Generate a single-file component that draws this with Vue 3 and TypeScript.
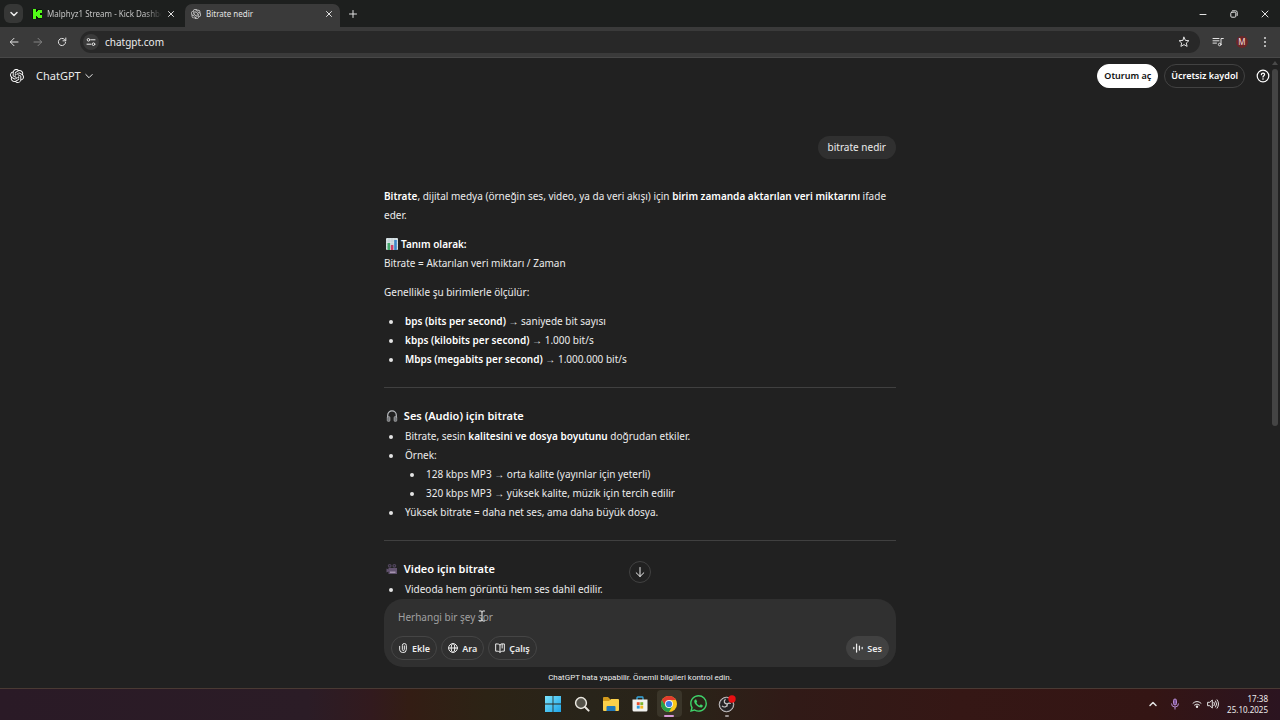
<script setup lang="ts">
import { ref } from 'vue'

interface Unit {
  name: string
  text: string
}

const address = ref('chatgpt.com')
const prompt = ref('')

const units: Unit[] = [
  { name: 'bps (bits per second)', text: 'saniyede bit sayısı' },
  { name: 'kbps (kilobits per second)', text: '1.000 bit/s' },
  { name: 'Mbps (megabits per second)', text: '1.000.000 bit/s' },
]

const samples: string[] = [
  '128 kbps MP3 → orta kalite (yayınlar için yeterli)',
  '320 kbps MP3 → yüksek kalite, müzik için tercih edilir',
]

const knot =
  'M22.2819 9.8211a5.9847 5.9847 0 0 0-.5157-4.9108 6.0462 6.0462 0 0 0-6.5098-2.9A6.0651 6.0651 0 0 0 4.9807 4.1818a5.9847 5.9847 0 0 0-3.9977 2.9 6.0462 6.0462 0 0 0 .7427 7.0966 5.98 5.98 0 0 0 .511 4.9107 6.051 6.051 0 0 0 6.5146 2.9001A5.9847 5.9847 0 0 0 13.2599 24a6.0557 6.0557 0 0 0 5.7718-4.2058 5.9894 5.9894 0 0 0 3.9977-2.9001 6.0557 6.0557 0 0 0-.7475-7.073zm-9.022 12.6081a4.4755 4.4755 0 0 1-2.8764-1.0408l.1419-.0804 4.7783-2.7582a.7948.7948 0 0 0 .3927-.6813v-6.7369l2.02 1.1686a.071.071 0 0 1 .038.052v5.5826a4.504 4.504 0 0 1-4.4945 4.4944zm-9.6607-4.1254a4.4708 4.4708 0 0 1-.5346-3.0137l.142.0852 4.783 2.7582a.7712.7712 0 0 0 .7806 0l5.8428-3.3685v2.3324a.0804.0804 0 0 1-.0332.0615L9.74 19.9502a4.4992 4.4992 0 0 1-6.1408-1.6464zM2.3408 7.8956a4.485 4.485 0 0 1 2.3655-1.9728V11.6a.7664.7664 0 0 0 .3879.6765l5.8144 3.3543-2.0201 1.1685a.0757.0757 0 0 1-.071 0l-4.8303-2.7865A4.504 4.504 0 0 1 2.3408 7.872zm16.5963 3.8558L13.1038 8.364 15.1192 7.2a.0757.0757 0 0 1 .071 0l4.8303 2.7913a4.4944 4.4944 0 0 1-.6765 8.1042v-5.6772a.79.79 0 0 0-.407-.667zm2.0107-3.0231l-.142-.0852-4.7735-2.7818a.7759.7759 0 0 0-.7854 0L9.409 9.2297V6.8974a.0662.0662 0 0 1 .0284-.0615l4.8303-2.7866a4.4992 4.4992 0 0 1 6.6802 4.66zM8.3065 12.863l-2.02-1.1638a.0804.0804 0 0 1-.038-.0567V6.0742a4.4992 4.4992 0 0 1 7.3757-3.4537l-.142.0805L8.704 5.459a.7948.7948 0 0 0-.3927.6813zm1.0976-2.3654l2.602-1.4998 2.6069 1.4998v2.9994l-2.5974 1.4997-2.6067-1.4997Z'
</script>

<template>
  <div class="desktop">
    <div class="tabstrip">
      <button class="tab-search" aria-label="Sekmelerde ara">
        <svg width="10" height="10" viewBox="0 0 10 10"><path d="M2 3.5 5 6.5 8 3.5" class="line bold" /></svg>
      </button>
      <div class="tab">
        <svg class="favicon" width="10" height="10" viewBox="0 0 10 10">
          <rect width="10" height="10" rx="1" fill="#0a150a" />
          <path fill="#53fc18" d="M1 0h3v3h1V2h1V1h4v3H8v1H7v0h1v1h2v3H6V8H5V7H4v3H1z" />
        </svg>
        <a class="tab-title fade" href="#">Malphyz1 Stream - Kick Dashboard</a>
        <button class="icon-btn" aria-label="Sekmeyi kapat">
          <svg width="8" height="8" viewBox="0 0 8 8"><path d="M1.5 1.5 6.5 6.5M6.5 1.5 1.5 6.5" class="line" /></svg>
        </button>
      </div>
      <div class="tab active">
        <svg class="favicon" width="10" height="10" viewBox="0 0 24 24"><path :d="knot" fill="#dcdcdc" /></svg>
        <a class="tab-title" href="#">Bitrate nedir</a>
        <button class="icon-btn" aria-label="Sekmeyi kapat">
          <svg width="8" height="8" viewBox="0 0 8 8"><path d="M1.5 1.5 6.5 6.5M6.5 1.5 1.5 6.5" class="line" /></svg>
        </button>
      </div>
      <button class="icon-btn new-tab" aria-label="Yeni sekme">
        <svg width="8" height="8" viewBox="0 0 8 8"><path d="M4 .5v7M.5 4h7" class="line" /></svg>
      </button>
      <div class="window-controls">
        <button class="icon-btn" aria-label="Küçült">
          <svg width="8" height="8" viewBox="0 0 8 8"><path d="M1 4.5h6" class="line" /></svg>
        </button>
        <button class="icon-btn" aria-label="Önceki boyut">
          <svg width="8" height="8" viewBox="0 0 8 8">
            <rect x=".8" y="2.2" width="5" height="5" rx="1" class="line" />
            <path d="M2.5.8h3.2q1.5 0 1.5 1.5v3.2" class="line" />
          </svg>
        </button>
        <button class="icon-btn" aria-label="Kapat">
          <svg width="8" height="8" viewBox="0 0 8 8"><path d="M1 1 7 7M7 1 1 7" class="line" /></svg>
        </button>
      </div>
    </div>

    <div class="toolbar">
      <button class="icon-btn nav" aria-label="Geri">
        <svg width="10" height="10" viewBox="0 0 10 10"><path d="M9 5H1.5M5 1.3 1.3 5 5 8.7" class="line" /></svg>
      </button>
      <button class="icon-btn nav dim" aria-label="İleri">
        <svg width="10" height="10" viewBox="0 0 10 10"><path d="M1 5h7.5M5 1.3 8.7 5 5 8.7" class="line" /></svg>
      </button>
      <button class="icon-btn nav" aria-label="Yenile">
        <svg width="10" height="10" viewBox="0 0 10 10">
          <path d="M8.6 5.2A3.6 3.6 0 1 1 7.5 2.4L8.7 3.6M8.8 1v2.8H6" class="line" />
        </svg>
      </button>
      <div class="omnibox">
        <button class="site-info" aria-label="Site bilgilerini göster">
          <svg width="10" height="10" viewBox="0 0 10 10">
            <circle cx="2.5" cy="2.8" r="1.3" class="line" />
            <path d="M5 2.8h4M1 7.2h4" class="line" />
            <circle cx="7.5" cy="7.2" r="1.3" class="line" />
          </svg>
        </button>
        <input v-model="address" class="address" aria-label="Adres ve arama çubuğu" />
        <button class="icon-btn" aria-label="Yer işareti ekle">
          <svg width="12" height="12" viewBox="0 0 12 12">
            <path d="M6 1.2 7.4 4.4 10.9 4.7 8.3 7 9.1 10.4 6 8.6 2.9 10.4 3.7 7 1.1 4.7 4.6 4.4Z" class="line" />
          </svg>
        </button>
      </div>
      <div class="toolbar-actions">
        <button class="icon-btn" aria-label="Medya denetimleri">
          <svg width="12" height="12" viewBox="0 0 12 12">
            <path d="M1 2.5h6M1 4.8h6M1 7.1h3.5M9 8.3V2.5h2.3" class="line" />
            <circle cx="7.7" cy="8.5" r="1.3" class="line" />
          </svg>
        </button>
        <button class="avatar" aria-label="Profil">M</button>
        <button class="icon-btn" aria-label="Diğer">
          <svg width="10" height="12" viewBox="0 0 10 12" fill="#ddd">
            <circle cx="5" cy="2" r="1" /><circle cx="5" cy="6" r="1" /><circle cx="5" cy="10" r="1" />
          </svg>
        </button>
      </div>
    </div>

    <main class="page">
      <header class="page-header">
        <svg width="14" height="14" viewBox="0 0 24 24"><path :d="knot" fill="#fff" /></svg>
        <button class="model">
          ChatGPT
          <svg width="8" height="8" viewBox="0 0 8 8"><path d="M.8 2.5 4 5.7 7.2 2.5" class="line" /></svg>
        </button>
        <div class="account">
          <button class="pill light">Oturum aç</button>
          <button class="pill outline">Ücretsiz kaydol</button>
          <button class="icon-btn help" aria-label="Yardım">
            <svg width="14" height="14" viewBox="0 0 14 14">
              <circle cx="7" cy="7" r="5.8" class="line thick" />
              <path d="M5.4 5.6C5.5 3.5 8.7 3.6 8.6 5.6 8.6 6.8 7 6.8 7 8.1" class="line thick" />
              <circle cx="7" cy="10" r=".8" fill="#fff" />
            </svg>
          </button>
        </div>
      </header>

      <div class="thread">
        <article class="column">
          <p class="question">bitrate nedir</p>
          <p>
            <strong>Bitrate</strong>, dijital medya (örneğin ses, video, ya da veri akışı) için
            <strong>birim zamanda aktarılan veri miktarını</strong> ifade eder.
          </p>
          <p>
            <svg class="emoji" width="12" height="12" viewBox="0 0 12 12">
              <rect width="12" height="12" rx="1" fill="#d9e3e6" />
              <path d="M0 3h12M0 6h12M0 9h12M3 0v12M6 0v12M9 0v12" stroke="#adc0ca" stroke-width=".5" />
              <path d="M1.5 5h2.6v7H1.5z" fill="#43a86b" />
              <path d="M4.8 7h2.6v5H4.8z" fill="#cf3d65" />
              <path d="M8.2 2h2.6v10H8.2z" fill="#3d86c8" />
            </svg>
            <strong>Tanım olarak:</strong><br />
            Bitrate = Aktarılan veri miktarı / Zaman
          </p>
          <p>Genellikle şu birimlerle ölçülür:</p>
          <ul>
            <li v-for="unit in units" :key="unit.name">
              <strong>{{ unit.name }}</strong> → {{ unit.text }}
            </li>
          </ul>
          <hr />
          <h3>
            <svg class="emoji" width="12" height="12" viewBox="0 0 12 12" fill="none">
              <path d="M1.7 8V5.2a4.3 4.3 0 0 1 8.6 0V8" stroke="#b9bcc0" stroke-width="1.2" />
              <rect x="1.2" y="6.5" width="2.8" height="5" rx="1.2" fill="#74777b" stroke="#c5c5c5" stroke-width=".5" />
              <rect x="8" y="6.5" width="2.8" height="5" rx="1.2" fill="#74777b" stroke="#c5c5c5" stroke-width=".5" />
            </svg>
            Ses (Audio) için bitrate
          </h3>
          <ul>
            <li>Bitrate, sesin <strong>kalitesini ve dosya boyutunu</strong> doğrudan etkiler.</li>
            <li>
              Örnek:
              <ul>
                <li v-for="sample in samples" :key="sample">{{ sample }}</li>
              </ul>
            </li>
            <li>Yüksek bitrate = daha net ses, ama daha büyük dosya.</li>
          </ul>
          <hr />
          <h3>
            <svg class="emoji" width="12" height="12" viewBox="0 0 12 12">
              <circle cx="3.7" cy="2.8" r="1.9" fill="#51465c" /><circle cx="8.3" cy="2.8" r="1.9" fill="#51465c" />
              <circle cx="3.7" cy="2.8" r=".7" fill="#282330" /><circle cx="8.3" cy="2.8" r=".7" fill="#282330" />
              <path d="M.5 5.5 2.5 6.5V5h8.5v6H2.5V8.5L.5 9.5z" fill="#62536f" />
              <path d="M4 8.5h5.5V10H4z" fill="#a493ae" />
            </svg>
            Video için bitrate
          </h3>
          <ul>
            <li>Videoda hem görüntü hem ses dahil edilir.</li>
          </ul>
        </article>
        <button class="scroll-down" aria-label="En alta kaydır">
          <svg width="12" height="12" viewBox="0 0 12 12"><path d="M6 1.5v9M2.2 6.8 6 10.5 9.8 6.8" class="line" /></svg>
        </button>
      </div>

      <form class="composer" @submit.prevent>
        <input v-model="prompt" class="prompt" placeholder="Herhangi bir şey sor" aria-label="Herhangi bir şey sor" />
        <div class="tools">
          <button type="button" class="chip">
            <svg width="10" height="10" viewBox="0 0 12 12">
              <path d="M2 4v4.200A3.700 3.700 0 0 0 5.700 11.400 3.700 3.700 0 0 0 10 8V3A2.400 2.400 0 0 0 5.200 3V7.800A1.200 1.200 0 0 0 7.600 7.800V3.500" class="line thick" />
            </svg>
            Ekle
          </button>
          <button type="button" class="chip">
            <svg width="10" height="10" viewBox="0 0 12 12">
              <circle cx="6" cy="6" r="5.3" class="line thick" />
              <ellipse cx="6" cy="6" rx="2.2" ry="5.3" class="line thick" />
              <path d="M.7 6h10.600" class="line thick" />
            </svg>
            Ara
          </button>
          <button type="button" class="chip">
            <svg width="10" height="10" viewBox="0 0 12 12">
              <path d="M6 2.2C5 1.300 3.600 1 .8 1.100v8.700C3.600 9.700 5 10.100 6 11M6 2.200V11M6 2.200C6.600 1.600 7.200 1.200 8.200 1M6 11C7 10.100 8.400 9.700 11.200 9.800V1.100H8.600v5" class="line thick" />
            </svg>
            Çalış
          </button>
          <button type="button" class="chip voice">
            <svg width="10" height="10" viewBox="0 0 12 12">
              <path d="M1 5.200v1.600M4.300 1.200v9.600M7.700 3.600v4.800M11 5.200v1.600" class="line bold" />
            </svg>
            Ses
          </button>
        </div>
        <svg class="cursor" width="8" height="12" viewBox="0 0 8 12">
          <path d="M1.5 1H3q1 0 1 1v8q0 1-1 1H1.5M6.5 1H5Q4 1 4 2M6.5 11H5q-1 0-1-1" class="line" />
        </svg>
      </form>
      <p class="disclaimer">ChatGPT hata yapabilir. Önemli bilgileri kontrol edin.</p>

      <div class="scrollbar">
        <svg width="6" height="4" viewBox="0 0 6 4"><path d="M3 0 6 4H0z" fill="#4a4a4a" /></svg>
        <div class="thumb"></div>
      </div>
    </main>

    <footer class="taskbar">
      <nav class="apps">
        <button class="app" aria-label="Başlat">
          <svg width="16" height="16" viewBox="0 0 16 16">
            <defs>
              <linearGradient id="win" x1="0" y1="0" x2="1" y2="1">
                <stop offset="0" stop-color="#7be3fb" /><stop offset="1" stop-color="#1ea5e8" />
              </linearGradient>
            </defs>
            <path fill="url(#win)" d="M0 0h7.6v7.6H0zM8.4 0H16v7.6H8.4zM0 8.4h7.6V16H0zM8.4 8.4H16V16H8.4z" />
          </svg>
        </button>
        <button class="app" aria-label="Ara">
          <svg width="16" height="16" viewBox="0 0 16 16" fill="none">
            <circle cx="7" cy="7" r="5.4" fill="#55534a" stroke="#e9e6df" stroke-width="1.5" />
            <path d="M11 11 14.6 14.6" stroke="#e9e6df" stroke-width="2" stroke-linecap="round" />
          </svg>
        </button>
        <button class="app" aria-label="Dosya Gezgini">
          <svg width="18" height="16" viewBox="0 0 18 16">
            <path d="M1 2q0-1 1-1h4l2 2v4H1z" fill="#d39a1c" />
            <path d="M1 5h6l2-2h7q1 0 1 1v10q0 1-1 1H2q-1 0-1-1z" fill="#fbd04b" />
            <path d="M4.5 15v-4q0-1 1-1h7q1 0 1 1v4z" fill="#1f78bb" />
          </svg>
        </button>
        <button class="app" aria-label="Microsoft Store">
          <svg width="16" height="16" viewBox="0 0 16 16">
            <path d="M5 4V1.8q0-.8.8-.8h4.4q.8 0 .8.8V4" fill="none" stroke="#36a9e0" stroke-width="1.3" />
            <path d="M.5 3.6h15V14q0 1.5-1.5 1.5H2Q.5 15.5.5 14z" fill="#f1f1ef" />
            <path d="M4.8 6.2h2.9v2.9H4.8z" fill="#e8502e" /><path d="M8.3 6.2h2.9v2.9H8.3z" fill="#7db52f" />
            <path d="M4.8 9.7h2.9v2.9H4.8z" fill="#2c9bde" /><path d="M8.3 9.7h2.9v2.9H8.3z" fill="#f3b61f" />
          </svg>
        </button>
        <button class="app current" aria-label="Google Chrome">
          <svg width="16" height="16" viewBox="0 0 16 16">
            <circle cx="8" cy="8" r="8" fill="#fbc91b" />
            <path d="M1.07 4A8 8 0 0 0 8 16L11.46 10 4.54 10z" fill="#27a04b" />
            <path d="M1.07 4 4.54 10 8 8 8 4z" fill="#27a04b" />
            <path d="M1.07 4A8 8 0 0 1 14.93 4H8L4.5 6 3.6 8.4z" fill="#e33b2e" />
            <circle cx="8" cy="8" r="4" fill="#f4f4f4" /><circle cx="8" cy="8" r="3.1" fill="#3a7de6" />
          </svg>
          <span class="mark wide"></span>
        </button>
        <button class="app" aria-label="WhatsApp">
          <svg width="17" height="17" viewBox="0 0 24 24">
            <path
              fill="#3fd26a"
              d="M17.472 14.382c-.297-.149-1.758-.867-2.03-.967-.273-.099-.471-.148-.67.15-.197.297-.767.966-.94 1.164-.173.199-.347.223-.644.075-.297-.15-1.255-.463-2.39-1.475-.883-.788-1.48-1.761-1.653-2.059-.173-.297-.018-.458.13-.606.134-.133.298-.347.446-.52.149-.174.198-.298.298-.497.099-.198.05-.371-.025-.52-.075-.149-.669-1.612-.916-2.207-.242-.579-.487-.5-.669-.51-.173-.008-.371-.01-.57-.01-.198 0-.52.074-.792.372-.272.297-1.04 1.016-1.04 2.479 0 1.462 1.065 2.875 1.213 3.074.149.198 2.096 3.2 5.077 4.487.709.306 1.262.489 1.694.625.712.227 1.36.195 1.871.118.571-.085 1.758-.719 2.006-1.413.248-.694.248-1.289.173-1.413-.074-.124-.272-.198-.57-.347m-5.421 7.403h-.004a9.87 9.87 0 01-5.031-1.378l-.361-.214-3.741.982.998-3.648-.235-.374a9.86 9.86 0 01-1.51-5.26c.001-5.45 4.436-9.884 9.888-9.884 2.64 0 5.122 1.03 6.988 2.898a9.825 9.825 0 012.893 6.994c-.003 5.45-4.437 9.884-9.885 9.884m8.413-18.297A11.815 11.815 0 0012.05 0C5.495 0 .16 5.335.157 11.892c0 2.096.547 4.142 1.588 5.945L.057 24l6.305-1.654a11.882 11.882 0 005.683 1.448h.005c6.554 0 11.89-5.335 11.893-11.893a11.821 11.821 0 00-3.48-8.413z"
            />
          </svg>
        </button>
        <button class="app" aria-label="OBS Studio">
          <svg width="18" height="18" viewBox="0 0 18 18" fill="none">
            <circle cx="8.5" cy="9.500" r="7.300" fill="#8f8c8d" stroke="#bdbabb" stroke-width="1" />
            <circle cx="8.500" cy="9.500" r="6.400" fill="#242224" />
            <path d="M7.500 4.200C5.200 6 6.300 9 9 8.800M12.800 8.500C10.500 7.200 8.300 9 9.300 11.500M4 10.800C6 12.900 9 12 9.200 9.600" stroke="#c9c6c7" stroke-width="1.200" />
            <circle cx="14" cy="4" r="3.700" fill="#e80f12" />
          </svg>
          <span class="mark"></span>
        </button>
      </nav>
      <div class="tray">
        <button class="icon-btn" aria-label="Gizli simgeleri göster">
          <svg width="10" height="10" viewBox="0 0 10 10"><path d="M2 6.500 5 3.500 8 6.500" class="line bold" /></svg>
        </button>
        <button class="icon-btn mic" aria-label="Mikrofon">
          <svg width="10" height="12" viewBox="0 0 10 12" fill="none" stroke="#b58bd0">
            <rect x="3.5" y="1" width="3" height="6" rx="1.5" fill="#7a5296" />
            <path d="M1.5 5.5a3.5 3.5 0 0 0 7 0M5 9v2.5" />
          </svg>
        </button>
        <button class="icon-btn" aria-label="Ağ">
          <svg width="10" height="10" viewBox="0 0 10 10">
            <path d="M1 4.2Q5 .6 9 4.2M2.5 6Q5 3.800 7.500 6" class="line" />
            <circle cx="5" cy="7.800" r="1.200" fill="#eee" />
          </svg>
        </button>
        <button class="icon-btn" aria-label="Ses düzeyi">
          <svg width="12" height="12" viewBox="0 0 12 12">
            <path d="M1 4.3h1.8L5.3 2v8L2.8 7.7H1zM7 4.3q1.2 1.700 0 3.400M8.600 3q2.200 3 0 6M10.100 1.800q3 4.200 0 8.400" class="line" />
          </svg>
        </button>
        <div class="clock"><time>17:38</time><time>25.10.2025</time></div>
      </div>
    </footer>
  </div>
</template>

<style>
body {
  margin: 0;
  background: #212121;
}
</style>

<style scoped>
.desktop {
  display: flex;
  flex-direction: column;
  height: 100vh;
  background: #212121;
  color: #ececec;
  font: 10px/19px 'Segoe UI', 'Noto Sans', sans-serif;
}

button,
input {
  margin: 0;
  padding: 0;
  border: 0;
  background: none;
  color: inherit;
  font: inherit;
}

button {
  display: flex;
  align-items: center;
  justify-content: center;
}

svg {
  flex: none;
}

.line {
  fill: none;
  stroke: currentColor;
  stroke-width: 1;
  stroke-linecap: round;
  stroke-linejoin: round;
}

.line.thick {
  stroke-width: 1.2;
}

.line.bold {
  stroke-width: 1.5;
}

.icon-btn {
  color: #e2e2e2;
}

/* Browser frame */
.tabstrip {
  display: flex;
  align-items: center;
  height: 27px;
  padding: 0 11px 0 4px;
  background: #1d1f1e;
}

.tab-search {
  width: 19px;
  height: 19px;
  border-radius: 6px;
  background: #363736;
}

.tab {
  display: flex;
  align-items: center;
  gap: 5px;
  box-sizing: border-box;
  width: 155px;
  height: 23px;
  margin-top: 4px;
  padding: 0 7px 4px 6px;
  color: #c4c4c4;
  font-size: 8px;
}

.tab:not(.active) {
  width: 162px;
  padding-right: 10px;
  padding-left: 9px;
}

.tab.active {
  border-radius: 7px 7px 0 0;
  background: #3a3a3a;
  color: #e4e4e4;
}

.tab-title {
  flex: 1;
  overflow: hidden;
  color: inherit;
  text-decoration: none;
  white-space: nowrap;
}

.fade {
  mask-image: linear-gradient(to right, #000 85%, transparent);
}

.new-tab {
  margin-left: 9px;
}

.window-controls {
  display: flex;
  gap: 23px;
  margin-left: auto;
}

.toolbar {
  display: flex;
  align-items: center;
  gap: 14px;
  box-sizing: border-box;
  height: 31px;
  padding: 0 10px 0 9px;
  border-bottom: 1px solid #484848;
  background: #3a3a3a;
}

.nav.dim {
  color: #838383;
}

.omnibox {
  display: flex;
  flex: 1;
  align-items: center;
  gap: 6px;
  height: 22px;
  margin: 0 -2px 0 -1px;
  padding: 0 10px 0 3px;
  border-radius: 11px;
  background: #282828;
}

.site-info {
  width: 16px;
  height: 16px;
  border-radius: 8px;
  background: #3a3a3a;
}

.address {
  flex: 1;
  min-width: 0;
  outline: none;
}

.toolbar-actions {
  display: flex;
  align-items: center;
  gap: 12px;
}

.avatar {
  width: 12px;
  height: 12px;
  border-radius: 6px;
  background: #6b2628;
  color: #f2dede;
  font-size: 8px;
  line-height: 12px;
}

/* Chat page */
.page {
  position: relative;
  display: flex;
  flex: 1;
  flex-direction: column;
  min-height: 0;
}

.page-header {
  display: flex;
  align-items: center;
  gap: 12px;
  height: 35px;
  padding: 0 10px;
}

.model {
  gap: 4px;
  font-size: 11px;
}

.account {
  display: flex;
  align-items: center;
  gap: 6px;
  margin-left: auto;
}

.pill {
  box-sizing: border-box;
  height: 24px;
  padding: 0 6px;
  border: 1px solid #424242;
  border-radius: 12px;
  color: #fff;
  font-size: 9px;
  font-weight: 600;
}

.pill.light {
  border-color: #fff;
  background: #fff;
  color: #0d0d0d;
}

.help {
  margin-left: 5px;
  color: #fff;
}

.thread {
  position: relative;
  flex: 1;
  min-height: 0;
  overflow: hidden;
}

.column {
  display: flex;
  flex-direction: column;
  width: 40%;
  min-width: 512px;
  margin: 0 auto;
  padding-top: 43px;
}

p {
  margin: 0 0 10px;
}

strong {
  color: #fff;
  font-weight: 600;
}

.question {
  align-self: flex-end;
  margin-bottom: 28px;
  padding: 2px 10px;
  border-radius: 12px;
  background: #303030;
}

.emoji {
  margin: 0 3px 0 2px;
  vertical-align: -2px;
}

ul {
  margin: 0;
  padding-left: 21px;
}

li {
  position: relative;
  list-style: none;
}

li::before {
  content: '';
  position: absolute;
  top: 8px;
  left: -16px;
  width: 4px;
  height: 4px;
  border-radius: 2px;
  background: #e4e4e4;
}

hr {
  width: 100%;
  height: 1px;
  margin: 18px 0;
  border: 0;
  background: #404040;
}

h3 {
  margin: 0 0 2px;
  color: #fff;
  font-size: 11px;
  font-weight: 600;
  line-height: 19px;
}

.scroll-down {
  position: absolute;
  bottom: 16px;
  left: 50%;
  box-sizing: border-box;
  width: 22px;
  height: 22px;
  margin-left: -11px;
  border: 1px solid #424242;
  border-radius: 11px;
  background: #212121;
}

.composer {
  position: relative;
  box-sizing: border-box;
  width: 40%;
  min-width: 512px;
  margin: 0 auto;
  padding: 9px 7px 7px;
  border-radius: 19px;
  background: #303030;
}

.prompt {
  display: block;
  box-sizing: border-box;
  width: 100%;
  height: 19px;
  padding: 0 7px;
  outline: none;
}

.prompt::placeholder {
  color: #a0a0a0;
  opacity: 1;
}

.tools {
  display: flex;
  gap: 4px;
  margin-top: 9px;
}

.chip {
  gap: 4px;
  box-sizing: border-box;
  height: 24px;
  padding: 0 6px;
  border: 1px solid #454545;
  border-radius: 12px;
  font-size: 9px;
  font-weight: 600;
}

.voice {
  margin-left: auto;
  border-color: #414141;
  background: #414141;
}

.cursor {
  position: absolute;
  top: 11px;
  left: 94px;
}

.disclaimer {
  margin: 0;
  padding: 1px 0;
  font-family: 'Segoe UI', Roboto, sans-serif;
  font-size: 8px;
  text-align: center;
}

.scrollbar {
  position: absolute;
  top: 3px;
  right: 2px;
  bottom: 0;
  display: flex;
  flex-direction: column;
  align-items: center;
  gap: 4px;
  width: 6px;
}

.thumb {
  width: 6px;
  height: 57%;
  border-radius: 3px;
  background: #444;
}

/* System taskbar */
.taskbar {
  display: grid;
  grid-template-columns: 1fr auto 1fr;
  box-sizing: border-box;
  height: 32px;
  padding-bottom: 2px;
  border-top: 1px solid #4a3a34;
  background: linear-gradient(
    to right,
    #2a1a26 0%,
    #2b1c26 24%,
    #321a1e 29%,
    #331d14 32%,
    #2c2315 38%,
    #28241a 46%,
    #2a2318 54%,
    #311a17 62%,
    #351715 75%,
    #341514 90%,
    #2b1420 100%
  );
}

.apps {
  display: flex;
  grid-column: 2;
  gap: 4px;
  align-items: center;
}

.app {
  position: relative;
  width: 25px;
  height: 27px;
  border-radius: 4px;
}

.app.current {
  background: #3a3529;
}

.mark {
  position: absolute;
  bottom: 0;
  left: 50%;
  width: 4px;
  height: 2px;
  margin-left: -2px;
  border-radius: 1px;
  background: #9a9290;
}

.mark.wide {
  width: 10px;
  margin-left: -5px;
  background: #d79bd8;
}

.tray {
  display: flex;
  align-items: center;
  justify-content: flex-end;
  gap: 5px;
  padding-right: 12px;
}

.mic {
  margin: 0 7px;
}

.clock {
  display: flex;
  flex-direction: column;
  align-items: flex-end;
  margin-left: 3px;
  font-size: 8px;
  line-height: 11px;
}
</style>
